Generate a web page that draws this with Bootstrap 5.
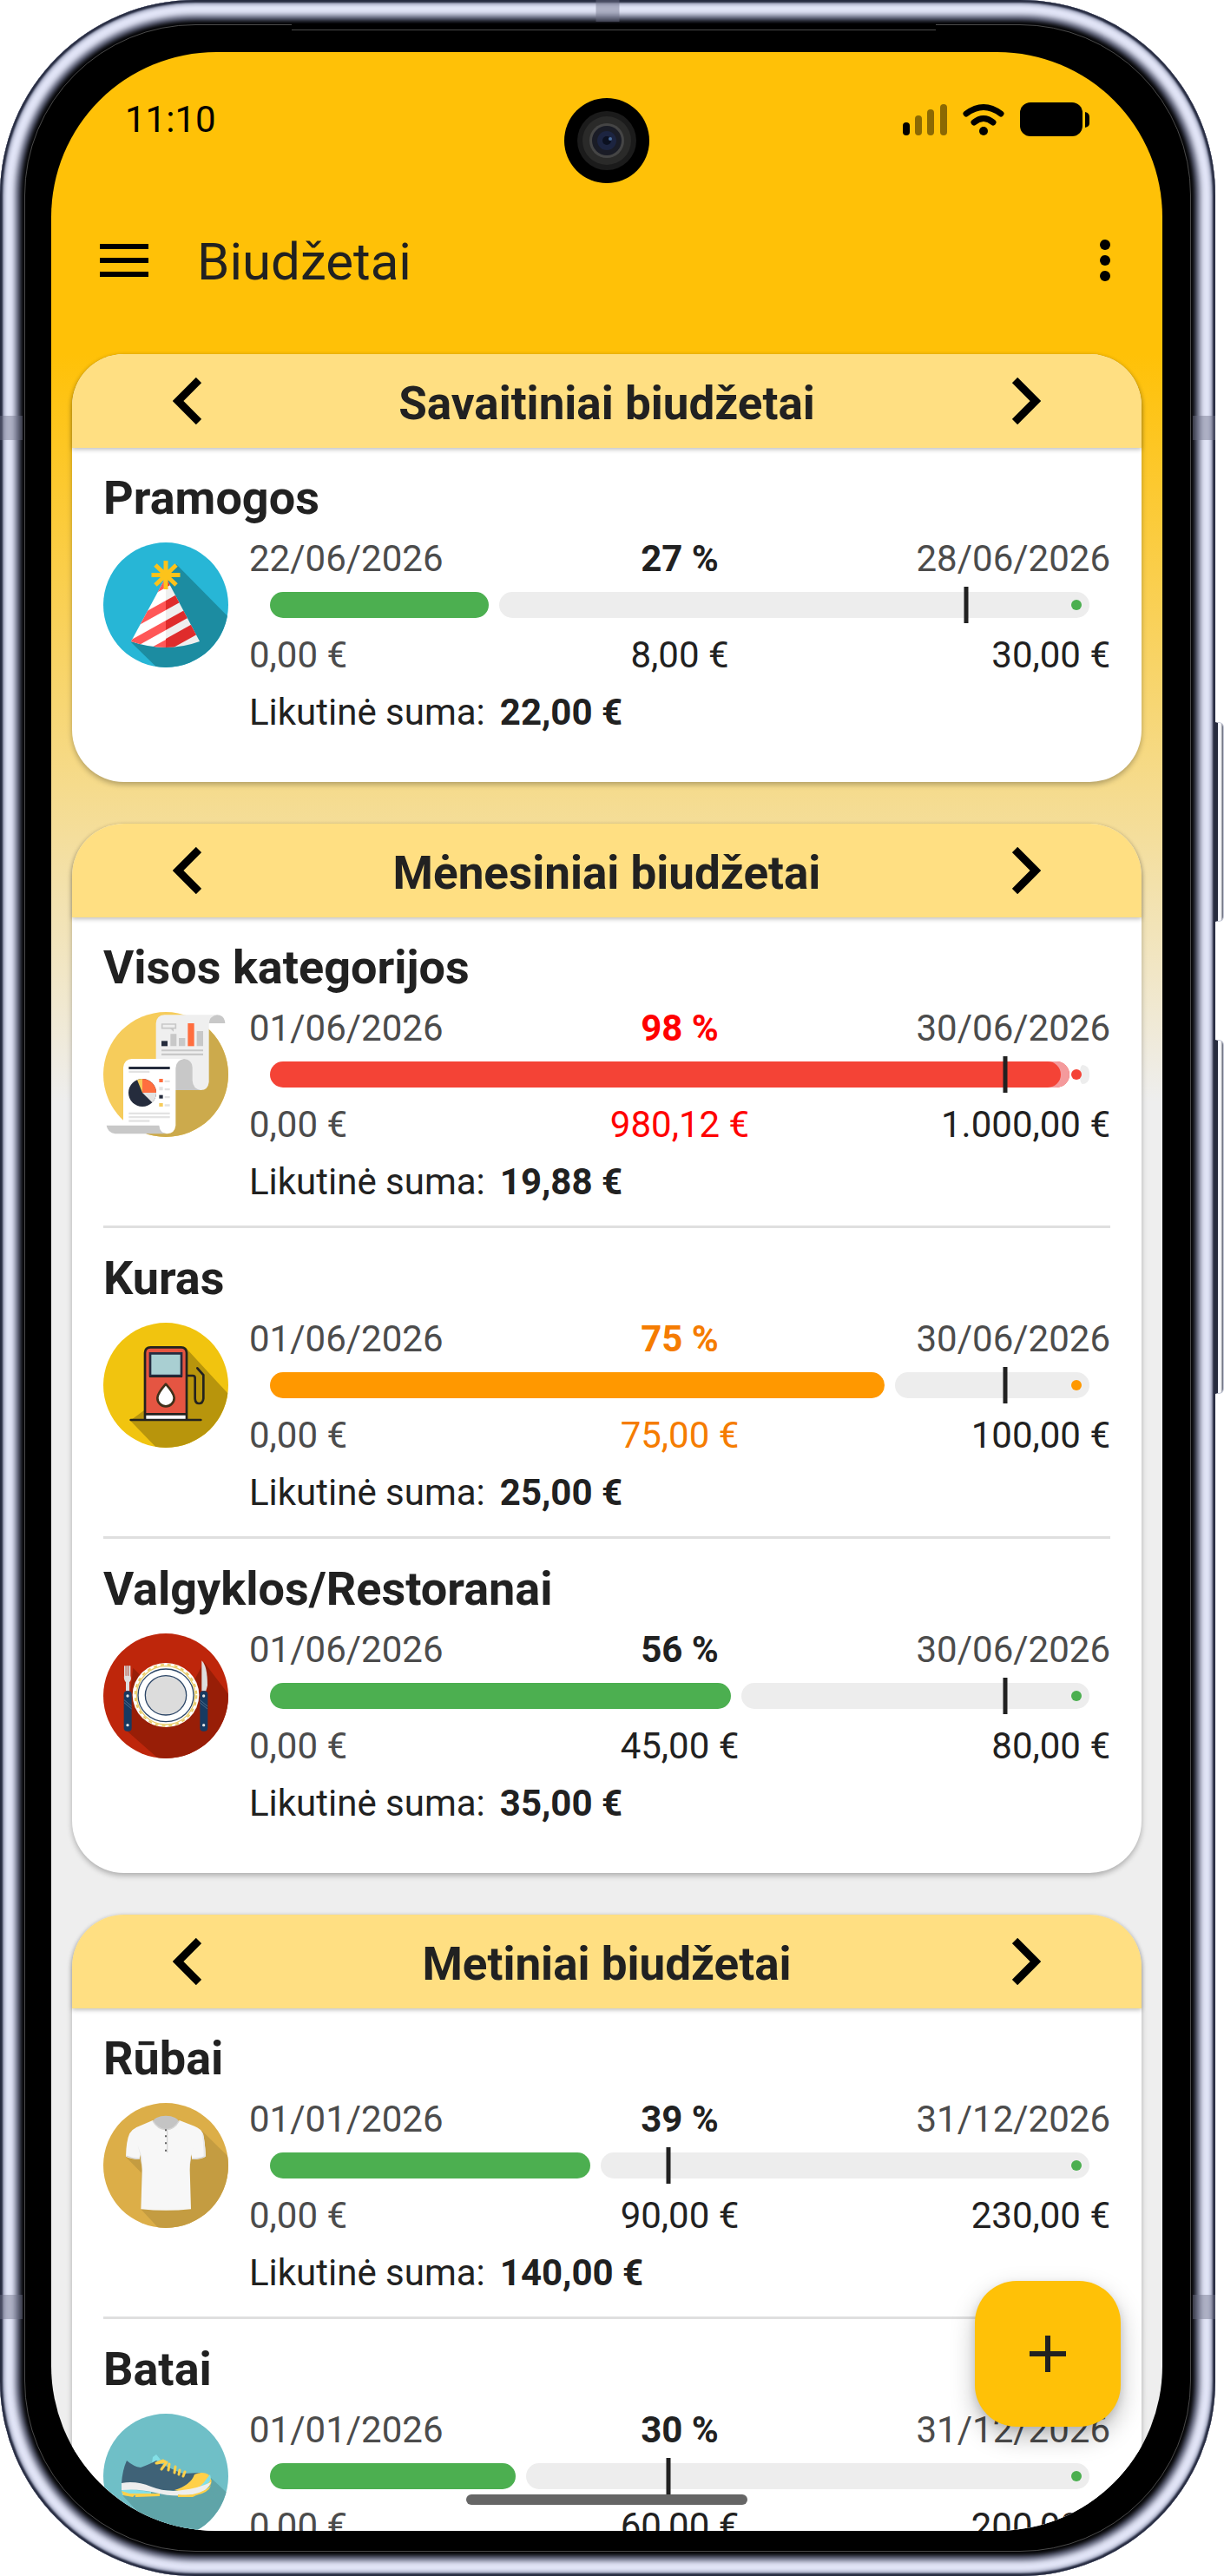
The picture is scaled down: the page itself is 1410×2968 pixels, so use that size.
<!DOCTYPE html>
<html lang="lt">

<head>
  <meta charset="UTF-8">
  <meta name="viewport" content="width=device-width, initial-scale=1.0">
  <title>Biudžetai</title>
  <link href="https://cdn.jsdelivr.net/npm/bootstrap@5.3.0/dist/css/bootstrap.min.css" rel="stylesheet">
  <style>
    body {
      font-family: Roboto, "Liberation Sans", sans-serif;
      font-size: 42px;
      line-height: 50px;
      color: #212121;
      background: #fff;
    }

    /* Phone body */
    .device {
      height: 100vh;
      margin-right: 10px;
      padding: 60px 61px 52px 59px;
      border-radius: 225px;
      background: #000;
      box-shadow: inset 0 0 2px 3px #262b40, inset 0 0 4px 5px #8f95ae,
        inset 0 0 6px 18px #e2e5f7, inset 0 0 5px 24px #4a4e64;
    }

    .device::before {
      content: "";
      position: absolute;
      inset: 28px;
      border: 1px solid #4a4a4a;
      border-radius: 197px;
    }

    .speaker {
      top: 27px;
      left: 24%;
      right: 23%;
      height: 8px;
      background: #000;
      border-bottom: 1px solid #4a4a4a;
    }

    .band {
      background: rgba(110, 114, 135, .45);
    }

    .band-side {
      width: 26px;
      height: 28px;
    }

    .band-edge {
      width: 27px;
      height: 25px;
    }

    .side-key {
      right: -10px;
      width: 10px;
      border: 1px solid #c5c8d6;
      border-left: 3px solid #272b3e;
      border-radius: 0 6px 6px 0;
      background: linear-gradient(90deg, #e8ebfa, #fff 50%, #555a6c);
    }

    .key-volume { top: 832px; height: 230px; }
    .key-power { top: 1198px; height: 408px; }
    .band-upper { top: 479px; }
    .band-lower { top: 2644px; }

    .screen {
      border-radius: 190px;
      background: #eee linear-gradient(#ffc107 348px, #eee 1210px) no-repeat;
    }

    .camera {
      top: 53px;
      width: 98px;
      height: 98px;
    }

    /* Top bars */
    .status-bar {
      padding: 53px 84px 0 85px;
      color: #000;
    }

    .app-bar {
      height: 172px;
      padding: 102px 60px 0 56px;
      gap: 56px;
    }

    .app-title {
      font-size: 60px;
      line-height: 70px;
      padding-top: 4px;
    }

    /* Budget cards */
    .budget-list {
      padding: 73px 24px 0;
      gap: 48px;
      min-height: 0;
    }

    .budget-card {
      border-radius: 60px;
      background: #fff;
      box-shadow: 0 3px 6px rgba(0, 0, 0, .28);
    }

    .period-bar {
      height: 108px;
      padding: 0 116px;
      border-radius: 60px 60px 0 0;
      background: #ffdf82;
      box-shadow: 0 2px 5px rgba(0, 0, 0, .25);
    }

    .heading {
      font-size: 54px;
      line-height: 64px;
      font-weight: 700;
    }

    .period-bar .heading {
      font-size: 53px;
      padding-top: 5px;
    }

    .budget-rows {
      padding: 0 36px 30px;
    }

    .budget {
      padding: 26px 0 25px;
    }

    .budget + .budget {
      border-top: 3px solid #dfdfdf;
    }

    .budget-main {
      margin-top: 13px;
      gap: 24px;
    }

    .budget-icon {
      width: 144px;
      height: 144px;
      margin-top: 6px;
    }

    .thirds {
      display: grid;
      grid-template-columns: 1fr auto 1fr;
    }

    .muted {
      color: #4c4c4c;
    }

    .meter {
      height: 42px;
      margin: 7px 24px 12px;
      padding: 6px 0;
      gap: 12px;
    }

    .meter-fill,
    .meter-rest {
      height: 30px;
      border-radius: 15px;
    }

    .meter-fill {
      background: var(--tone);
    }

    .meter-rest {
      min-width: 11px;
      background: #ededed;
    }

    .meter-full .meter-fill {
      box-shadow: inset -10px 0 #f49a9c;
    }

    .meter-full .meter-rest {
      height: 22px;
      border-radius: 4px 10px 10px 4px / 11px;
    }

    .meter-dot {
      top: 15px;
      right: 9px;
      width: 12px;
      height: 12px;
      background: var(--tone);
    }

    .meter-today {
      top: 0;
      width: 5px;
      height: 42px;
      background: #212121;
    }

    .remaining {
      margin-top: 16px;
      gap: 17px;
    }

    .tone-green { --tone: #4caf50; --tone-text: #212121; }
    .tone-orange { --tone: #ff9800; --tone-text: #f57c00; }
    .tone-red { --tone: #f44336; --tone-text: #f00; }

    .spent {
      color: var(--tone-text);
    }

    .fab {
      right: 48px;
      bottom: 120px;
      width: 168px;
      height: 168px;
      border-radius: 48px;
      background: #ffc107;
      box-shadow: 0 12px 28px rgba(0, 0, 0, .25), 0 4px 10px rgba(0, 0, 0, .12);
    }

    .fab:hover {
      background: #ffca2c;
    }

    .home-bar {
      bottom: 30px;
      width: 324px;
      height: 12px;
      background: #666;
    }
  </style>
</head>

<body>
  <svg class="position-absolute" width="0" height="0" aria-hidden="true">
    <defs>
      <clipPath id="clipHat"><circle cx="72" cy="72" r="72" /></clipPath>
      <clipPath id="clipCone"><path d="M72 40L32 114Q52 121 72 121T111 114Z" /></clipPath>
      <clipPath id="clipReport"><circle cx="273" cy="264" r="216" /></clipPath>
      <clipPath id="clipFuel"><circle cx="273" cy="288" r="216" /></clipPath>
      <clipPath id="clipFood"><circle cx="273" cy="282" r="216" /></clipPath>
      <clipPath id="clipShirt"><circle cx="273" cy="285" r="216" /></clipPath>
    </defs>

    <symbol id="icon-hat" viewBox="0 0 144 144">
      <g clip-path="url(#clipHat)">
        <path fill="#27b6d6" d="M0 0h144v144H0z" />
        <path fill="#1c8ca1" d="M84 25L160 102V160H78L32 115L72 42Z" />
      </g>
      <g clip-path="url(#clipCone)">
        <path fill="#fff" d="M20 30h52v100H20z" />
        <path fill="#efefef" d="M72 30h50v100H72z" />
        <g fill="#ff5757">
          <path d="M20 30H72V52L20 81Z" />
          <path d="M72 67V78L20 107V96Z" />
          <path d="M72 90V101L20 130V119Z" />
          <path d="M72 112V124H50Z" />
        </g>
        <g fill="#df2c2c">
          <path d="M72 30H84V45L72 52Z" />
          <path d="M72 67V78L122 50V39Z" />
          <path d="M72 90V101L122 73V62Z" />
          <path d="M72 111V126L122 98V83Z" />
        </g>
      </g>
      <g stroke="#fcc31b" stroke-width="5">
        <path d="M72 21V54M55.500 37.500H88.500M60 26L84 49M84 26L60 49" />
      </g>
    </symbol>

    <symbol id="icon-report" viewBox="57 48 432 432">
      <g clip-path="url(#clipReport)">
        <path fill="#f6cc5b" d="M57 48h432v432H57z" />
        <path fill="#ccaa4c" d="M410 95L520 205V500H230L206 468L306 300Z" />
      </g>
      <path fill="#c8c8c8" d="M420 87Q424 58 450 58T478 87Z" />
      <path fill="#efefef" d="M239 87Q241 60 268 58H450Q423 62 422 90V290Q419 317 394 318H300L239 220Z" />
      <path fill="#c8c8c8" d="M300 210H336Q365 214 365 240V285Q367 314 394 318H300Z" />
      <path fill="none" stroke="#c8c8c8" stroke-width="5" d="M260 90H307V104H260Z" />
      <path fill="#c8c8c8" d="M288 105h12v11zM289 124h21v42h-21zM318 138h22v28h-22zM380 114h22v52h-22zM258 178h144v6H258zM258 191h144v7H258z" />
      <path fill="#252c3d" d="M258 148h21v18h-21z" />
      <path fill="#ff6e3f" d="M349 87h22v79h-22z" />
      <path fill="#fff" d="M126 240Q129 212 156 210H336Q308 214 307 242V440Q304 467 278 469L126 440Z" />
      <path fill="#c8c8c8" d="M68 440H250Q252 466 278 469H98Q72 465 68 440Z" />
      <path fill="#252c3d" d="M145 237h142v9H145z" />
      <path fill="#e3e3e3" d="M145 251h72v7h-72zM145 395h142v7H145zM145 408h142v7H145zM145 421h72v7h-72zM269 284h18v7h-18zM269 312h18v7h-18zM269 339h18v7h-18zM269 367h18v7h-18zM250 307h13v12h-13z" />
      <circle cx="192" cy="327" r="48" fill="#252c3d" />
      <path fill="#ff6e3f" d="M192 327V279A48 48 0 0 1 240 327ZM250 279h13v12h-13z" />
      <path fill="#e3e3e3" d="M192 327H240A48 48 0 0 1 226 361Z" />
      <path fill="#f6cc5b" d="M192 327L174 283A48 48 0 0 1 192 279ZM250 363h13v12h-13z" />
      <path fill="#252c3d" d="M250 335h13v12h-13z" />
    </symbol>

    <symbol id="icon-fuel" viewBox="57 72 432 432">
      <g clip-path="url(#clipFuel)">
        <path fill="#f1c40f" d="M57 72h432v432H57z" />
        <path fill="#b8950c" d="M343 160L500 330V520H256L150 410L300 300Z" />
      </g>
      <path fill="#e55542" d="M201 390V175Q203 158 220 157H326Q343 158 345 175V390Z" />
      <path fill="#fff" d="M204 390h138v15H204z" />
      <path fill="none" stroke="#23221f" stroke-width="8" stroke-linecap="round" d="M201 405V176Q202 157 220 157H326Q344 157 345 176V405M201 388H345M152 408H394M349 255H366Q374 255 374 263V334Q375 351 388 351T403 334V253L382 229" />
      <path fill="#a9cfd2" stroke="#252b40" stroke-width="8" d="M219 178H327V255H219Z" />
      <path stroke="#23221f" stroke-width="4" d="M216 259H330" />
      <path fill="#fff" stroke="#40301a" stroke-width="8" stroke-linejoin="round" d="M273 284Q301 315 302 332A29 29 0 0 1 244 332Q245 315 273 284Z" />
    </symbol>

    <symbol id="icon-food" viewBox="57 66 432 432">
      <g clip-path="url(#clipFood)">
        <path fill="#be260b" d="M57 66h432v432H57z" />
        <path fill="#981e07" d="M405 165L500 290V510H260L135 400L160 185L200 225L370 230Z" />
      </g>
      <ellipse cx="273" cy="279" rx="115" ry="111" fill="#fff" />
      <circle cx="273" cy="280" r="101" fill="none" stroke="#e9cc66" stroke-width="4" />
      <circle cx="273" cy="280" r="106" fill="none" stroke="#e9cc66" stroke-width="6" stroke-dasharray="12 12" />
      <ellipse cx="273" cy="280" rx="96" ry="91" fill="#fff" stroke="#2b4566" stroke-width="4" />
      <ellipse cx="273" cy="280" rx="71" ry="68" fill="#dcdcdc" stroke="#2b4566" stroke-width="4" />
      <path fill="#dedede" d="M129 178h5v34h3v-34h5v34h3v-34h6v34Q156 226 147 235V265H135V235Q127 226 129 212Z" />
      <path fill="#c8b0ac" d="M136 178h4v34h-4zM143 178h4v34h-4z" />
      <path fill="#dedede" d="M397 160Q417 178 417 245L412 265H397Z" />
      <rect x="128" y="265" width="27" height="139" rx="12" fill="#173a61" />
      <rect x="391" y="265" width="27" height="139" rx="12" fill="#173a61" />
      <path stroke="#4e6d8d" stroke-width="3" d="M129 296L155 318M129 305L155 327M391 296L417 318M391 305L417 327" />
      <g fill="#e6e6e6">
        <circle cx="141" cy="282" r="5" />
        <circle cx="141" cy="383" r="5" />
        <circle cx="404" cy="282" r="5" />
        <circle cx="404" cy="383" r="5" />
      </g>
    </symbol>

    <symbol id="icon-shirt" viewBox="57 69 432 432">
      <g clip-path="url(#clipShirt)">
        <path fill="#dcae48" d="M57 69h432v432H57z" />
        <path fill="#c49c41" d="M398 165L500 265V520H265L188 437V310L135 256Z" />
      </g>
      <ellipse cx="273" cy="137" rx="45" ry="24" fill="#c4c4c4" />
      <path fill="#f7f7f7" d="M228 129Q245 160 273 161T320 129L372 149Q395 158 402 176Q408 200 411 254Q395 264 364 264L361 247Q356 270 356 300L360 436Q273 445 187 436L191 300Q189 265 184 247L182 264Q150 263 135 254Q136 200 148 174Q157 160 172 153Z" />
      <path fill="none" stroke="#d5d5d5" stroke-width="4" d="M136 252Q158 262 182 262M411 252Q390 262 365 262M228 131Q245 160 273 161T319 131M278 161V240" />
      <path fill="#e8e8e8" d="M402 176Q408 200 411 252L404 256Q404 205 397 168Z" />
      <path fill="#e6e6e6" d="M176 215L191 258L190 290L184 247ZM371 215L357 258L356 290L361 247Z" />
      <path fill="#666" d="M270 160h6v6h-6zM270 181h6v6h-6zM270 205h6v6h-6zM270 230h6v6h-6z" />
    </symbol>

    <symbol id="icon-shoe" viewBox="0 0 144 144">
      <g clip-path="url(#clipHat)">
        <path fill="#6fbfc7" d="M0 0h144v144H0z" />
        <path fill="#5fa4a8" d="M124 74L150 98V150H74L22 94Z" />
      </g>
      <path fill="#83dfe6" d="M56 57L57 50L61 47L66 53Z" />
      <path fill="#3f6277" d="M27 54Q35 61 43 62Q54 58 61 54Q75 63 92 69L112 68L98 89L60 88L21 80Q22 65 27 54Z" />
      <path fill="#ffd04a" d="M105 70Q114 66 121 70Q127 77 123 83L100 92L82 88Q101 82 105 70Z" />
      <path fill="#83dfe6" d="M123 70Q125 75 121 80L105 88Q114 83 119 75Z" />
      <path fill="#83dfe6" d="M21 86L55 90V94H22Z" />
      <path fill="#eee" d="M21 80Q38 77 55 84Q73 91 91 88Q109 86 124 79Q120 90 106 93Q82 97 60 91Q40 86 21 88Z" />
      <path fill="#ffd04a" d="M21 89L30 92H65V95L37 96V93L34 96L23 94ZM86 93Q109 96 124 83Q121 91 107 94L103 96L86 96Z" />
      <path stroke="#ffd04a" stroke-width="3" stroke-linecap="round" d="M61 57L69 54M62 57L71 55M67 64L73 56M75 65L76 58M82 68L83 61M87 70L88 65M92 72L94 67" />
    </symbol>
  </svg>

  <div class="device position-relative">
    <div class="speaker position-absolute"></div>
    <span class="band band-edge position-absolute top-0 start-50 translate-middle-x"></span>
    <span class="band band-side band-upper position-absolute start-0"></span>
    <span class="band band-side band-upper position-absolute end-0"></span>
    <span class="band band-side band-lower position-absolute start-0"></span>
    <span class="band band-side band-lower position-absolute end-0"></span>
    <span class="side-key key-volume position-absolute"></span>
    <span class="side-key key-power position-absolute"></span>

    <div class="screen position-relative h-100 overflow-hidden d-flex flex-column">
      <div class="status-bar d-flex justify-content-between align-items-center">
        <span>11:10</span>
        <svg width="215" height="40" viewBox="0 0 215 40" aria-hidden="true">
          <rect x="0" y="23" width="8" height="15" rx="4" />
          <g opacity=".45">
            <rect x="14" y="15" width="8" height="23" rx="4" />
            <rect x="28" y="8" width="8" height="30" rx="4" />
            <rect x="43" y="2" width="8" height="36" rx="4" />
          </g>
          <g fill="none" stroke="#000" stroke-width="7" stroke-linecap="round">
            <path d="M73 13Q93 -2 113 13" />
            <path d="M82 23Q93 14 104 23" />
          </g>
          <circle cx="93" cy="33" r="5" />
          <rect x="135" y="0" width="72" height="39" rx="12" />
          <path d="M210 11Q215 12 215 17V24Q215 28 210 29Z" />
        </svg>
      </div>

      <header class="app-bar d-flex align-items-center">
        <button type="button" class="btn p-0 border-0 d-flex" aria-label="Meniu">
          <svg width="56" height="38" viewBox="0 0 56 38">
            <path d="M0 0h56v6H0zM0 16h56v6H0zM0 32h56v6H0z" />
          </svg>
        </button>
        <h1 class="app-title fw-normal mb-0 flex-grow-1">Biudžetai</h1>
        <button type="button" class="btn p-0 border-0 d-flex" aria-label="Daugiau">
          <svg width="12" height="48" viewBox="0 0 12 48">
            <circle cx="6" cy="6" r="6" />
            <circle cx="6" cy="24" r="6" />
            <circle cx="6" cy="42" r="6" />
          </svg>
        </button>
      </header>

      <main class="budget-list d-flex flex-column flex-grow-1 overflow-hidden" id="budgetList"></main>

      <svg class="camera position-absolute start-50 translate-middle-x" viewBox="0 0 98 98" aria-hidden="true">
        <circle cx="49" cy="49" r="49" />
        <circle cx="49" cy="49" r="34" fill="#1b1b1b" />
        <circle cx="49" cy="49" r="28" fill="#2a2a29" />
        <circle cx="49" cy="49" r="20" fill="#454545" />
        <circle cx="49" cy="49" r="17" fill="#1a1c26" />
        <circle cx="49" cy="49" r="11" fill="#1c2440" />
        <circle cx="49" cy="49" r="5" fill="#0b1020" />
        <circle cx="53" cy="47" r="2" fill="#4a6ea0" />
      </svg>

      <button type="button" class="fab btn border-0 p-0 position-absolute d-flex align-items-center justify-content-center" aria-label="Pridėti">
        <svg width="42" height="42" viewBox="0 0 42 42">
          <path fill="#212121" d="M18 0h6v18h18v6H24v18h-6V24H0v-6h18z" />
        </svg>
      </button>
      <div class="home-bar position-absolute start-50 translate-middle-x rounded-pill"></div>
    </div>
  </div>

  <script src="https://cdn.jsdelivr.net/npm/bootstrap@5.3.0/dist/js/bootstrap.bundle.min.js"></script>
  <script>
    const periods = [
      {
        title: 'Savaitiniai biudžetai', from: '22/06/2026', to: '28/06/2026', today: 85,
        budgets: [
          { name: 'Pramogos', icon: 'hat', tone: 'green', spent: 8, limit: 30 }
        ]
      },
      {
        title: 'Mėnesiniai biudžetai', from: '01/06/2026', to: '30/06/2026', today: 89.7,
        budgets: [
          { name: 'Visos kategorijos', icon: 'report', tone: 'red', spent: 980.12, limit: 1000 },
          { name: 'Kuras', icon: 'fuel', tone: 'orange', spent: 75, limit: 100 },
          { name: 'Valgyklos/Restoranai', icon: 'food', tone: 'green', spent: 45, limit: 80 }
        ]
      },
      {
        title: 'Metiniai biudžetai', from: '01/01/2026', to: '31/12/2026', today: 48.6,
        budgets: [
          { name: 'Rūbai', icon: 'shirt', tone: 'green', spent: 90, limit: 230 },
          { name: 'Batai', icon: 'shoe', tone: 'green', spent: 60, limit: 200 }
        ]
      }
    ];

    function money(value) {
      const [whole, cents] = value.toFixed(2).split('.');
      return whole.replace(/\B(?=(\d{3})+$)/g, '.') + ',' + cents + ' €';
    }

    function chevron(path, label) {
      return `
        <button type="button" class="btn p-0 border-0 d-flex" aria-label="${label}">
          <svg width="33" height="54" viewBox="0 0 33 54">
            <path fill="none" stroke="#000" stroke-width="9" d="${path}" />
          </svg>
        </button>`;
    }

    function budgetRow(budget, period) {
      const percent = budget.spent / budget.limit * 100;
      return `
        <section class="budget tone-${budget.tone}">
          <h3 class="heading mb-0">${budget.name}</h3>
          <div class="budget-main d-flex">
            <svg class="budget-icon flex-shrink-0" aria-hidden="true"><use href="#icon-${budget.icon}" /></svg>
            <div class="flex-grow-1">
              <div class="thirds">
                <span class="muted">${period.from}</span>
                <span class="spent fw-bold">${Math.round(percent)} %</span>
                <span class="muted text-end">${period.to}</span>
              </div>
              <div class="meter d-flex align-items-center position-relative ${percent > 97 ? 'meter-full' : ''}"
                role="progressbar" aria-label="${budget.name}" aria-valuenow="${Math.round(percent)}" aria-valuemin="0" aria-valuemax="100">
                <div class="meter-fill" style="width: ${percent}%"></div>
                <div class="meter-rest flex-fill"></div>
                <span class="meter-dot position-absolute rounded-circle"></span>
                <span class="meter-today position-absolute translate-middle-x" style="left: ${period.today}%"></span>
              </div>
              <div class="thirds">
                <span class="muted">${money(0)}</span>
                <span class="spent">${money(budget.spent)}</span>
                <span class="text-end">${money(budget.limit)}</span>
              </div>
              <div class="remaining d-flex">
                <span>Likutinė suma:</span>
                <span class="fw-bold">${money(budget.limit - budget.spent)}</span>
              </div>
            </div>
          </div>
        </section>`;
    }

    document.getElementById('budgetList').innerHTML = periods.map(period => `
      <article class="budget-card flex-shrink-0">
        <div class="period-bar d-flex align-items-center justify-content-between">
          ${chevron('M30 3L6 27L30 51', 'Ankstesnis')}
          <h2 class="heading mb-0">${period.title}</h2>
          ${chevron('M3 3L27 27L3 51', 'Kitas')}
        </div>
        <div class="budget-rows">
          ${period.budgets.map(budget => budgetRow(budget, period)).join('')}
        </div>
      </article>`).join('');
  </script>
</body>

</html>
